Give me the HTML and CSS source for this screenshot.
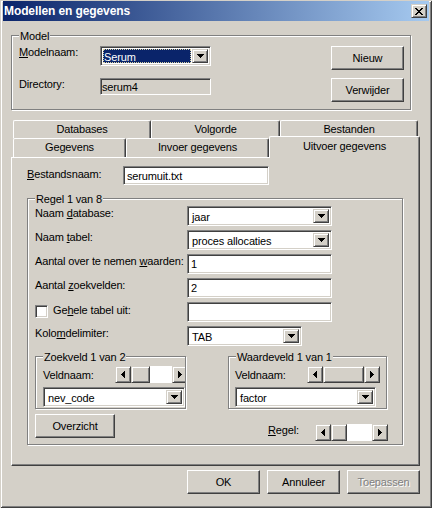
FILE: index.html
```html
<!DOCTYPE html>
<html lang="nl">
<head>
<meta charset="utf-8">
<title>Modellen en gegevens</title>
<link rel="stylesheet" href="styles.css">
</head>
<body>
<div class="window">
  <div class="titlebar">
    <span class="title">Modellen en gegevens</span>
    <span class="caption-btn">
      <svg width="8" height="7" viewBox="0 0 8 7" shape-rendering="crispEdges"><path d="M0 0h2v1H0zM6 0h2v1H6zM1 1h2v1H1zM5 1h2v1H5zM2 2h4v1H2zM3 3h2v1H3zM2 4h4v1H2zM1 5h2v1H1zM5 5h2v1H5zM0 6h2v1H0zM6 6h2v1H6z" fill="#000"/></svg>
    </span>
  </div>

  <div class="client">
    <div class="group model-group">
      <span class="group-label">Model</span>
      <div class="model-fields">
        <span class="lbl"><u>M</u>odelnaam:</span>
        <div class="combo w111">
          <span class="combo-text selected">Serum</span>
          <span class="drop"><svg width="7" height="4" viewBox="0 0 7 4" shape-rendering="crispEdges"><path d="M0 0h7v1H0zM1 1h5v1H1zM2 2h3v1H2zM3 3h1v1H3z" fill="#000"/></svg></span>
        </div>
        <span class="lbl">Directory:</span>
        <div class="edit readonly w111 h17">serum4</div>
      </div>
      <div class="model-buttons">
        <button class="btn">Nieuw</button>
        <button class="btn">Verwijder</button>
      </div>
    </div>

    <div class="tabs">
      <div class="tabrow back">
        <div class="tab tab-databases">Databases</div>
        <div class="tab tab-volgorde">Volgorde</div>
        <div class="tab tab-bestanden">Bestanden</div>
      </div>
      <div class="tabrow front">
        <div class="tab tab-gegevens">Gegevens</div>
        <div class="tab tab-invoer">Invoer gegevens</div>
        <div class="tab tab-uitvoer active">Uitvoer gegevens</div>
      </div>
      <div class="panel">
        <div class="file-row">
          <span class="lbl file-lbl"><u>B</u>estandsnaam:</span>
          <div class="edit w146 h19">serumuit.txt</div>
        </div>

        <div class="group regel-group">
          <span class="group-label">Regel 1 van 8</span>
          <div class="regel-grid">
            <span class="lbl row-lbl">Naam <u>d</u>atabase:</span>
            <div class="combo w145">
              <span class="combo-text">jaar</span>
              <span class="drop"><svg width="7" height="4" viewBox="0 0 7 4" shape-rendering="crispEdges"><path d="M0 0h7v1H0zM1 1h5v1H1zM2 2h3v1H2zM3 3h1v1H3z" fill="#000"/></svg></span>
            </div>

            <span class="lbl row-lbl">Naam <u>t</u>abel:</span>
            <div class="combo w145">
              <span class="combo-text">proces allocaties</span>
              <span class="drop"><svg width="7" height="4" viewBox="0 0 7 4" shape-rendering="crispEdges"><path d="M0 0h7v1H0zM1 1h5v1H1zM2 2h3v1H2zM3 3h1v1H3z" fill="#000"/></svg></span>
            </div>

            <span class="lbl row-lbl">Aantal over te nemen <u>w</u>aarden:</span>
            <div class="edit w145 h20">1</div>

            <span class="lbl row-lbl">Aantal <u>z</u>oekvelden:</span>
            <div class="edit w145 h20">2</div>

            <span class="check-row">
              <span class="checkbox"></span>
              <span class="lbl row-lbl">Ge<u>h</u>ele tabel uit:</span>
            </span>
            <div class="edit w145 h20"></div>

            <span class="lbl row-lbl">Kolo<u>m</u>delimiter:</span>
            <div class="combo w115">
              <span class="combo-text">TAB</span>
              <span class="drop"><svg width="7" height="4" viewBox="0 0 7 4" shape-rendering="crispEdges"><path d="M0 0h7v1H0zM1 1h5v1H1zM2 2h3v1H2zM3 3h1v1H3z" fill="#000"/></svg></span>
            </div>
          </div>

          <div class="sub-groups">
            <div class="group subgroup zoek">
              <span class="group-label">Zoekveld 1 van 2</span>
              <div class="sub-row">
                <span class="lbl sub-lbl">Veldnaam:</span>
                <div class="sb-clip">
                  <div class="sb">
                    <span class="sb-btn"><svg width="4" height="7" viewBox="0 0 4 7" shape-rendering="crispEdges"><path d="M3 0h1v7H3zM2 1h1v5H2zM1 2h1v3H1zM0 3h1v1H0z" fill="#000"/></svg></span>
                    <span class="sb-thumb thumb-19"></span>
                    <span class="sb-track"></span>
                    <span class="sb-btn"><svg width="4" height="7" viewBox="0 0 4 7" shape-rendering="crispEdges"><path d="M0 0h1v7H0zM1 1h1v5H1zM2 2h1v3H2zM3 3h1v1H3z" fill="#000"/></svg></span>
                  </div>
                </div>
              </div>
              <div class="combo w142 sub-combo">
                <span class="combo-text">nev_code</span>
                <span class="drop"><svg width="7" height="4" viewBox="0 0 7 4" shape-rendering="crispEdges"><path d="M0 0h7v1H0zM1 1h5v1H1zM2 2h3v1H2zM3 3h1v1H3z" fill="#000"/></svg></span>
              </div>
            </div>

            <div class="group subgroup waarde">
              <span class="group-label">Waardeveld 1 van 1</span>
              <div class="sub-row">
                <span class="lbl sub-lbl">Veldnaam:</span>
                <div class="sb">
                  <span class="sb-btn"><svg width="4" height="7" viewBox="0 0 4 7" shape-rendering="crispEdges"><path d="M3 0h1v7H3zM2 1h1v5H2zM1 2h1v3H1zM0 3h1v1H0z" fill="#000"/></svg></span>
                  <span class="sb-thumb thumb-fill"></span>
                  <span class="sb-btn"><svg width="4" height="7" viewBox="0 0 4 7" shape-rendering="crispEdges"><path d="M0 0h1v7H0zM1 1h1v5H1zM2 2h1v3H2zM3 3h1v1H3z" fill="#000"/></svg></span>
                </div>
              </div>
              <div class="combo w141 sub-combo">
                <span class="combo-text">factor</span>
                <span class="drop"><svg width="7" height="4" viewBox="0 0 7 4" shape-rendering="crispEdges"><path d="M0 0h7v1H0zM1 1h5v1H1zM2 2h3v1H2zM3 3h1v1H3z" fill="#000"/></svg></span>
              </div>
            </div>
          </div>

          <div class="bottom-row">
            <button class="btn btn-overzicht">Overzicht</button>
            <div class="regel-nav">
              <span class="lbl regel-lbl"><u>R</u>egel:</span>
              <div class="sb">
                <span class="sb-btn"><svg width="4" height="7" viewBox="0 0 4 7" shape-rendering="crispEdges"><path d="M3 0h1v7H3zM2 1h1v5H2zM1 2h1v3H1zM0 3h1v1H0z" fill="#000"/></svg></span>
                <span class="sb-thumb thumb-16"></span>
                <span class="sb-track"></span>
                <span class="sb-btn"><svg width="4" height="7" viewBox="0 0 4 7" shape-rendering="crispEdges"><path d="M0 0h1v7H0zM1 1h1v5H1zM2 2h1v3H2zM3 3h1v1H3z" fill="#000"/></svg></span>
              </div>
            </div>
          </div>
        </div>
      </div>
    </div>

    <div class="dialog-buttons">
      <button class="btn">OK</button>
      <button class="btn">Annuleer</button>
      <button class="btn disabled">Toepassen</button>
    </div>
  </div>
</div>
</body>
</html>
```
FILE: styles.css
```css
* { box-sizing: border-box; }
html, body { margin: 0; padding: 0; }
body {
  width: 432px;
  height: 508px;
  overflow: hidden;
  background: #d4d0c8;
  font-family: "Liberation Sans", Arial, sans-serif;
  font-size: 11px;
  line-height: 13px;
  letter-spacing: -0.15px;
  color: #000;
}
u { text-decoration: underline; text-underline-offset: 1px; }

.window {
  width: 432px;
  height: 508px;
  padding: 1px 3px 3px 3px;
  background: #d4d0c8;
  box-shadow: inset 1px 1px #d4d0c8, inset -1px -1px #404040, inset 2px 2px #fff, inset -2px -2px #808080;
}

.titlebar {
  height: 20px;
  display: flex;
  align-items: center;
  justify-content: space-between;
  padding: 0 2px 0 1px;
  background: linear-gradient(90deg, #0a246a 0%, #a6caf0 100%);
}
.title {
  color: #fff;
  font-weight: bold;
  font-size: 12px;
  letter-spacing: -0.1px;
}
.caption-btn {
  width: 16px;
  height: 14px;
  display: flex;
  align-items: center;
  justify-content: center;
  background: #d4d0c8;
  border: 1px solid;
  border-color: #d4d0c8 #404040 #404040 #d4d0c8;
  box-shadow: inset 1px 1px #fff, inset -1px -1px #808080;
}

.client { padding-left: 8px; }

/* group boxes */
.group {
  position: relative;
  border: 1px solid #808080;
  box-shadow: inset 1px 1px #fff, 1px 1px #fff;
}
.group-label {
  position: absolute;
  top: -6px;
  left: 7px;
  padding: 0 1px;
  background: #d4d0c8;
  white-space: nowrap;
}

.lbl { white-space: nowrap; }

/* model group */
.model-group {
  width: 400px;
  height: 75px;
  margin-top: 14px;
  padding: 10px 6px 0 7px;
  display: flex;
  justify-content: space-between;
  align-items: flex-start;
}
.model-fields {
  display: grid;
  grid-template-columns: 81px auto;
  grid-template-rows: 20px 17px;
  row-gap: 12px;
  align-items: start;
}
.model-buttons {
  display: flex;
  flex-direction: column;
  gap: 8px;
}

/* buttons */
.btn {
  width: 73px;
  height: 24px;
  padding: 0;
  margin: 0;
  background: #d4d0c8;
  border: 1px solid;
  border-color: #fff #404040 #404040 #fff;
  box-shadow: inset -1px -1px #808080;
  font: inherit;
  letter-spacing: inherit;
  color: #000;
}
.btn.disabled {
  color: #808080;
  text-shadow: 1px 1px #fff;
}
.btn-overzicht { width: 80px; }

/* sunken fields */
.edit, .combo {
  border: 1px solid;
  border-color: #808080 #fff #fff #808080;
  box-shadow: inset 1px 1px #404040, inset -1px -1px #d4d0c8;
  background: #fff;
  padding: 1px 2px 1px 3px;
  white-space: nowrap;
  overflow: hidden;
}
.edit.readonly { background: #d4d0c8; padding-left: 1px; }
.h17 { height: 17px; line-height: 15px; }
.h19 { height: 19px; line-height: 16px; }
.h20 { height: 20px; line-height: 17px; }

.combo {
  height: 20px;
  display: flex;
  align-items: stretch;
  padding: 2px;
}
.combo-text {
  flex: 1;
  line-height: 16px;
  padding-left: 2px;
  overflow: hidden;
}
.combo-text.selected {
  background: #0a246a;
  color: #fff;
  margin-right: 1px;
  padding-left: 0;
  outline: 1px dotted #d8d0a0;
  outline-offset: -1px;
  text-indent: 1px;
}
.drop {
  width: 16px;
  flex: none;
  display: flex;
  align-items: center;
  justify-content: center;
  background: #d4d0c8;
  border: 1px solid;
  border-color: #d4d0c8 #404040 #404040 #d4d0c8;
  box-shadow: inset 1px 1px #fff, inset -1px -1px #808080;
}

.w111 { width: 111px; }
.w146 { width: 146px; }
.w145 { width: 145px; }
.w142 { width: 142px; }
.w141 { width: 141px; }
.w115 { width: 115px; }

/* tabs */
.tabs {
  width: 409px;
  margin-top: 10px;
}
.tabrow {
  display: flex;
  padding-left: 2px;
}
.tabrow.back { height: 18px; }
.tabrow.front { height: 19px; align-items: flex-end; }
.tab {
  height: 18px;
  flex: none;
  padding-top: 2px;
  text-align: center;
  background: #d4d0c8;
  border-left: 1px solid #fff;
  border-top: 1px solid #fff;
  border-right: 1px solid #404040;
  box-shadow: inset -1px 0 #808080;
  border-top-left-radius: 2px;
  border-top-right-radius: 2px;
  white-space: nowrap;
}
.front .tab { height: 19px; }
.tab.active {
  height: 22px;
  margin-bottom: -1px;
  padding-top: 3px;
  position: relative;
  z-index: 1;
}
.tab-databases { width: 138px; }
.tab-volgorde { width: 129px; }
.tab-bestanden { width: 138px; }
.tab-gegevens { width: 113px; }
.tab-invoer { width: 143px; }
.tab-uitvoer { width: 151px; }

.panel {
  width: 409px;
  height: 309px;
  border-left: 1px solid #fff;
  border-top: 1px solid #fff;
  border-right: 1px solid #404040;
  border-bottom: 1px solid #404040;
  box-shadow: inset -1px -1px #808080;
  padding: 8px 0 0 15px;
}

.file-row {
  display: flex;
  align-items: flex-start;
}
.file-lbl { width: 96px; padding-top: 2px; }

.regel-group {
  width: 376px;
  height: 247px;
  margin-top: 13px;
  padding: 7px 0 0 7px;
}
.regel-grid {
  display: grid;
  grid-template-columns: 152px auto;
  grid-auto-rows: 20px;
  row-gap: 4px;
  align-items: start;
}
.row-lbl { padding-top: 1px; }
.check-row {
  display: flex;
  align-items: flex-start;
  gap: 5px;
}
.checkbox {
  width: 13px;
  height: 13px;
  margin-top: 3px;
  background: #fff;
  border: 1px solid;
  border-color: #808080 #fff #fff #808080;
  box-shadow: inset 1px 1px #404040, inset -1px -1px #d4d0c8;
}
.check-row .row-lbl { padding-top: 2px; }

.sub-groups {
  display: flex;
  gap: 42px;
  margin-top: 10px;
}
.subgroup {
  height: 53px;
  padding: 9px 0 0 7px;
}
.zoek { width: 151px; }
.waarde { width: 159px; padding-left: 6px; }
.sub-row {
  display: flex;
  align-items: flex-start;
  height: 17px;
}
.sub-lbl { width: 72px; padding-top: 3px; }
.sub-combo { margin-top: 4px; }

/* scrollbars */
.sb-clip { width: 70px; overflow: hidden; }
.sb {
  display: flex;
  width: 73px;
  height: 17px;
  flex: none;
}
.sb-btn, .sb-thumb {
  height: 17px;
  flex: none;
  background: #d4d0c8;
  border: 1px solid;
  border-color: #d4d0c8 #404040 #404040 #d4d0c8;
  box-shadow: inset 1px 1px #fff, inset -1px -1px #808080;
}
.sb-btn {
  width: 16px;
  display: flex;
  align-items: center;
  justify-content: center;
}
.sb-track { flex: 1; background: #fff; }
.thumb-19 { width: 19px; }
.thumb-16 { width: 16px; }
.thumb-fill { flex: 1; }

.bottom-row {
  display: flex;
  align-items: flex-start;
  margin-top: 5px;
}
.regel-nav {
  display: flex;
  align-items: flex-start;
  margin-left: 153px;
  margin-top: 10px;
}
.regel-lbl { width: 47px; }

.dialog-buttons {
  width: 409px;
  display: flex;
  justify-content: flex-end;
  gap: 7px;
  margin-top: 4px;
}
```
